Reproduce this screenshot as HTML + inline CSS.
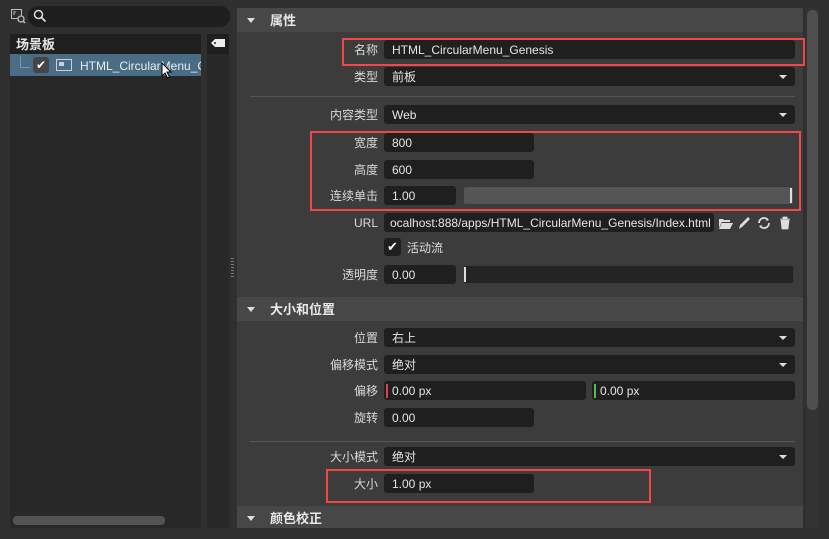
<!DOCTYPE html>
<html><head><meta charset="utf-8"><style>
*{box-sizing:border-box;margin:0;padding:0}
body{width:829px;height:539px;background:#2f2f2f;position:relative;overflow:hidden;font-family:"Liberation Sans","Noto Sans CJK SC",sans-serif;font-size:12px;color:#dcdcdc}
.a{position:absolute}
.in{position:absolute;background:#1f1f1f;border-radius:3px;height:19px;line-height:20px;padding-left:8px;color:#e6e6e6;font-size:12px;white-space:nowrap;overflow:hidden}
.lb{position:absolute;right:451px;height:19px;line-height:20px;color:#d8d8d8;text-align:right;white-space:nowrap}
.sec{position:absolute;left:237px;width:566px;background:#474747;height:24px;line-height:25px;font-weight:bold;color:#e8e8e8;font-size:13px}
.sec .t{position:absolute;left:33px}
.tri{position:absolute;left:10px;top:10px;width:0;height:0;border-left:4px solid transparent;border-right:4px solid transparent;border-top:5px solid #ddd}
.dd{position:absolute;right:8px;top:8px;width:0;height:0;border-left:4px solid transparent;border-right:4px solid transparent;border-top:4px solid #ddd}
.red{position:absolute;border:2px solid #f04848}
.sl{position:absolute;background:#242424;border-radius:3px;height:19px;border:1px solid #3a3a3a}
</style></head><body>
<svg class="a" style="left:10px;top:8px" width="16" height="16" viewBox="0 0 16 16"><rect x="1.5" y="1.5" width="10" height="9" fill="none" stroke="#bbb"/><path d="M3 4h3M3 6h2" stroke="#bbb"/><circle cx="11" cy="11" r="3" fill="#2f2f2f" stroke="#bbb" stroke-width="1.3"/><path d="M13 13l2 2" stroke="#bbb" stroke-width="1.5"/></svg>
<div class="a" style="left:28px;top:6px;width:202px;height:21px;background:#1e1e1e;border-radius:10px"></div>
<svg class="a" style="left:33px;top:9px" width="14" height="14" viewBox="0 0 14 14"><circle cx="5.5" cy="5.5" r="4" fill="none" stroke="#ddd" stroke-width="1.5"/><path d="M8.5 8.5l4 4" stroke="#ddd" stroke-width="1.8"/></svg>
<div class="a" style="left:10px;top:34px;width:191px;height:494px;background:#282828;border-radius:2px"></div>
<div class="a" style="left:10px;top:34px;width:191px;height:20px;background:#1f1f1f;line-height:21px;padding-left:6px;font-weight:bold;color:#e6e6e6;font-size:13px">场景板</div>
<div class="a" style="left:10px;top:54px;width:191px;height:22px;background:#4b6c85"></div>
<div class="a" style="left:20px;top:56px;width:1px;height:11px;background:#7e93a3"></div>
<div class="a" style="left:20px;top:67px;width:10px;height:1px;background:#7e93a3"></div>
<div class="a" style="left:33px;top:57px;width:16px;height:16px;background:#454545;border-radius:3px;color:#fff;font-size:12px;line-height:16px;text-align:center">✔</div>
<div class="a" style="left:56px;top:59px;width:16px;height:12px;border:1.5px solid #ccd;"></div>
<div class="a" style="left:59px;top:62px;width:5px;height:4px;background:#ccd"></div>
<div class="a" style="left:80px;top:55px;height:22px;line-height:22px;color:#e8eef3;white-space:nowrap;width:121px;overflow:hidden">HTML_CircularMenu_G</div>
<svg class="a" style="left:161px;top:62px" width="12" height="18" viewBox="0 0 12 18"><path d="M1 1v13l3-3 2.5 5 2-1-2.5-5h4z" fill="#fff" stroke="#000"/></svg>
<div class="a" style="left:13px;top:516px;width:152px;height:9px;background:#535353;border-radius:4px"></div>
<div class="a" style="left:207px;top:34px;width:22px;height:494px;background:#282828;border-radius:2px"></div>
<div class="a" style="left:207px;top:34px;width:22px;height:20px;background:#1f1f1f"></div>
<svg class="a" style="left:210px;top:38px" width="16" height="10" viewBox="0 0 16 10"><path d="M1 5l4-4h10v8H5z" fill="#eee"/><circle cx="5" cy="5" r="1" fill="#1f1f1f"/></svg>
<div class="a" style="left:231px;top:258px;width:3px;height:20px;background:repeating-linear-gradient(#777 0 1px,transparent 1px 3px)"></div>
<div class="a" style="left:237px;top:8px;width:566px;height:520px;background:#3c3c3c"></div>
<div class="a" style="left:806px;top:8px;width:13px;height:520px;background:#333"></div>
<div class="a" style="left:807px;top:10px;width:11px;height:400px;background:#4e4e4e;border-radius:5px"></div>
<div class="sec" style="top:8px"><div class="tri"></div><span class="t">属性</span></div>
<div class="lb" style="top:40px">名称</div><div class="in" style="left:384px;top:40px;width:411px">HTML_CircularMenu_Genesis</div>
<div class="lb" style="top:67px">类型</div><div class="in" style="left:384px;top:67px;width:411px">前板<div class="dd"></div></div>
<div class="a" style="left:250px;top:96px;width:545px;height:1px;background:#555"></div>
<div class="lb" style="top:105px">内容类型</div><div class="in" style="left:384px;top:105px;width:411px">Web<div class="dd"></div></div>
<div class="lb" style="top:133px">宽度</div><div class="in" style="left:384px;top:133px;width:150px">800</div>
<div class="lb" style="top:160px">高度</div><div class="in" style="left:384px;top:160px;width:150px">600</div>
<div class="lb" style="top:186px">连续单击</div><div class="in" style="left:384px;top:186px;width:72px">1.00</div>
<div class="sl" style="left:463px;top:186px;width:331px;background:#555"></div>
<div class="a" style="left:790px;top:188px;width:2px;height:15px;background:#ddd"></div>
<div class="lb" style="top:213px">URL</div><div class="in" style="left:384px;top:213px;width:330px;padding-left:6px">ocalhost:888/apps/HTML_CircularMenu_Genesis/Index.html</div>
<svg class="a" style="left:718px;top:215px" width="76" height="16" viewBox="0 0 76 16"><path d="M1 4h4l1 1h6v2H4l-3 6z M4 8h11l-3 6H1z" fill="#ddd"/><path d="M21 14l1-4 7-7 2 2-7 7z M29 3l1-1 2 2-1 1z" fill="#ddd"/><path d="M41 8a5 5 0 0 1 9-3M51 8a5 5 0 0 1-9 3" fill="none" stroke="#ddd" stroke-width="1.8"/><path d="M49 3l2 2-3 1z M43 13l-2-2 3-1z" fill="#ddd"/><path d="M62 4h10M65 4V2h4v2M63 5h8l-1 9h-6z" fill="#ddd" stroke="#ddd" stroke-width="0.8"/></svg>
<div class="a" style="left:384px;top:238px;width:17px;height:18px;background:#1f1f1f;border-radius:3px;color:#fff;text-align:center;line-height:18px;font-size:13px">✔</div>
<div class="a" style="left:407px;top:239px;line-height:19px;color:#ddd">活动流</div>
<div class="lb" style="top:265px">透明度</div><div class="in" style="left:384px;top:265px;width:72px">0.00</div>
<div class="sl" style="left:463px;top:265px;width:331px"></div>
<div class="a" style="left:464px;top:267px;width:2px;height:15px;background:#ddd"></div>
<div class="sec" style="top:297px"><div class="tri"></div><span class="t">大小和位置</span></div>
<div class="lb" style="top:328px">位置</div><div class="in" style="left:384px;top:328px;width:411px">右上<div class="dd"></div></div>
<div class="lb" style="top:355px">偏移模式</div><div class="in" style="left:384px;top:355px;width:411px">绝对<div class="dd"></div></div>
<div class="lb" style="top:381px">偏移</div><div class="in" style="left:384px;top:381px;width:202px">0.00 px</div><div class="a" style="left:386px;top:384px;width:2px;height:14px;background:#d44"></div>
<div class="in" style="left:592px;top:381px;width:203px">0.00 px</div><div class="a" style="left:594px;top:384px;width:2px;height:14px;background:#5b5"></div>
<div class="lb" style="top:408px">旋转</div><div class="in" style="left:384px;top:408px;width:150px">0.00</div>
<div class="a" style="left:250px;top:441px;width:545px;height:1px;background:#555"></div>
<div class="lb" style="top:447px">大小模式</div><div class="in" style="left:384px;top:447px;width:411px">绝对<div class="dd"></div></div>
<div class="lb" style="top:474px">大小</div><div class="in" style="left:384px;top:474px;width:150px">1.00 px</div>
<div class="sec" style="top:506px;height:22px"><div class="tri"></div><span class="t">颜色校正</span></div>
<div class="red" style="left:342px;top:38px;width:463px;height:28px"></div>
<div class="red" style="left:310px;top:131px;width:491px;height:80px"></div>
<div class="red" style="left:326px;top:469px;width:325px;height:34px"></div>
</body></html>
